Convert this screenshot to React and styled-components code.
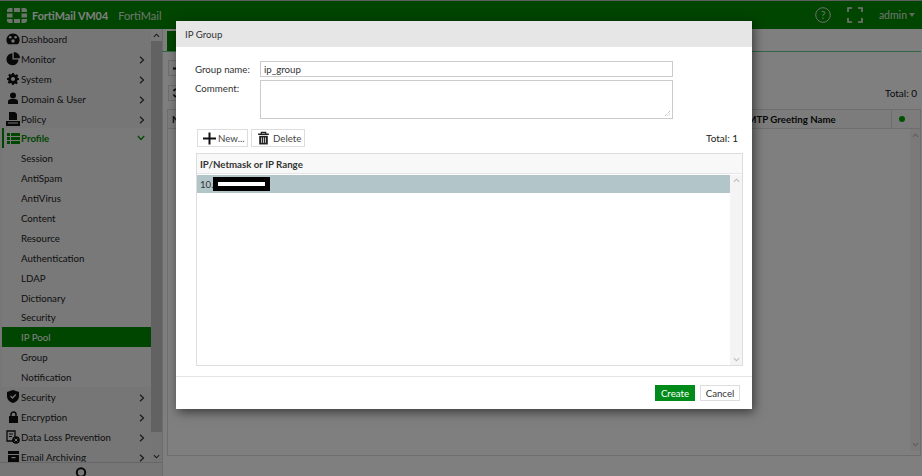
import React from 'react';
import styled, { createGlobalStyle } from 'styled-components';

const Global = createGlobalStyle`
  html, body { margin: 0; padding: 0; height: 100%; overflow: hidden; }
  body { font-family: Lato, "Open Sans", sans-serif; font-size: 9.7px; color: #222; background: #7f7f7f; }
  #root { height: 100%; }
`;

const Page = styled.div`
  position: relative;
  width: 922px;
  height: 476px;
  display: flex;
  flex-direction: column;
  overflow: hidden;
  background: #fff;
`;
const TopLine = styled.div`height: 1px; background: #bbb;`;
const TopBar = styled.header`
  height: 28px;
  flex: none;
  background: #008a00;
  color: #fff;
  display: flex;
  align-items: center;
  padding: 0 7px 0 7px;
`;
const Brand = styled.div`font-size: 10.8px; font-weight: 700; margin-left: 5px; white-space: nowrap;`;
const Product = styled.div`font-size: 11px; margin-left: 10px; opacity: .85;`;
const Spacer = styled.div`flex: 1;`;
const UserName = styled.div`font-size: 10.5px; margin-left: 16px; opacity: .85; display: flex; align-items: center; gap: 2px;`;
const Caret = styled.span`
  width: 0; height: 0;
  border-left: 3.5px solid transparent; border-right: 3.5px solid transparent;
  border-top: 4px solid #ddd;
`;
const TopIcon = styled.svg`margin-left: ${p => p.$ml || 0}px; display: block;`;

const Body = styled.div`flex: 1; display: flex; min-height: 0;`;
const Side = styled.aside`width: 163px; flex: none; display: flex; flex-direction: column; background: #ececec; border-right: 1px solid #d8d8d8; box-sizing: border-box;`;
const SideMain = styled.div`flex: 1; display: flex; min-height: 0;`;
const Menu = styled.nav`width: 151px; flex: none; overflow: hidden;`;
const Item = styled.div`
  height: 19.9px;
  display: flex;
  align-items: center;
  position: relative;
  box-sizing: border-box;
  padding-left: ${p => p.$sub ? 19 : p.$open ? 2 : 4}px;
  margin-left: 2px;
  font-size: 9.7px;
  white-space: nowrap;
  color: ${p => p.$active ? '#fff' : p.$open ? '#008a00' : '#222'};
  background: ${p => p.$active ? '#008a00' : p.$shade ? '#f2f2f2' : 'transparent'};
  font-weight: ${p => p.$open ? 700 : 400};
  border-left: ${p => p.$open ? '2px solid #008a00' : '0'};
`;
const ItemIcon = styled.span`width: 14px; height: 14px; margin-right: 1px; flex: none; display: flex; align-items: center; justify-content: center;`;
const Arrow = styled.svg`position: absolute; right: 6px; top: 7px;`;
const Track = styled.div`width: 11px; flex: none; background: #eaeaea; display: flex; flex-direction: column;`;
const TrackEnd = styled.div`height: 12px; display: flex; align-items: center; justify-content: center; background: ${p => p.$bg || 'transparent'};`;
const Thumb = styled.div`height: ${p => p.$h}px; background: #c4c4c4; flex: none;`;
const TrackRest = styled.div`flex: 1;`;
const SideFoot = styled.div`height: 13px; flex: none; border-top: 1px solid #ccc; display: flex; justify-content: center; overflow: hidden;`;

const Content = styled.main`flex: 1; min-width: 0; display: flex; flex-direction: column; padding: 0 1px 0 4px;`;
const Tabs = styled.div`height: 20px; border-bottom: 1px solid #66cc88; flex: none; display: flex; margin: 2px 0 0 -5px; padding-left: 5px;`;
const Tab = styled.div`width: 12px; background: #008a00;`;
const ToolArea = styled.div`height: 57px; flex: none; display: flex; flex-direction: column; padding: 8px 0 0 1px; box-sizing: border-box;`;
const ToolLine = styled.div`display: flex; align-items: center; justify-content: space-between; margin-top: ${p => p.$mt || 0}px; font-size: 10px; color: #111; padding-right: 4px;`;
const SmallBtn = styled.div`width: 30px; height: 16px; box-sizing: border-box; border: 1px solid #ddd; background: #fff; display: flex; align-items: center; padding-left: 2px;`;
const ListHead = styled.div`
  height: 20px; flex: none; display: flex; align-items: center; font-weight: 700; font-size: 9.7px; color: #111;
  border: 1px solid #ddd; box-sizing: border-box; background: #f8f8f8;
`;
const NameCell = styled.div`width: 574px; padding-left: 4px; box-sizing: border-box; flex: none; white-space: nowrap;`;
const HeadCell = styled.div`flex: 1; white-space: nowrap;`;
const DotCell = styled.div`width: 29px; height: 100%; border-left: 1px solid #ddd; display: flex; align-items: center; justify-content: center; padding-right: 8px; box-sizing: border-box;`;
const Dot = styled.span`width: 6px; height: 6px; border-radius: 50%; background: #00a000;`;
const ListBody = styled.div`flex: none; height: 327px; display: flex; justify-content: flex-end; border: 1px solid #ddd; border-top: 0; box-sizing: border-box;`;
const ListTrack = styled.div`width: 10px; height: 322px; background: #f4f4f4; display: flex; flex-direction: column; justify-content: space-between; padding: 3px 0; box-sizing: border-box;`;

const Overlay = styled.div`position: absolute; inset: 0; background: rgba(0,0,0,.5);`;
const Modal = styled.section`
  position: absolute;
  left: 176px; top: 21px;
  width: 576px; height: 388px;
  background: #fff;
  display: flex; flex-direction: column;
  box-shadow: 2px 3px 10px rgba(0,0,0,.55);
`;
const ModalHead = styled.div`height: 26px; flex: none; background: #e6e6e6; display: flex; align-items: center; padding-left: 9px; font-size: 9.7px; color: #333;`;
const Form = styled.div`padding: 14px 79px 0 19px; display: flex; flex-direction: column; gap: 3px;`;
const FormRow = styled.div`display: flex; align-items: flex-start;`;
const Label = styled.label`width: 65px; flex: none; font-size: 9.7px; color: #333; line-height: 16px;`;
const TextBox = styled.div`
  flex: 1; box-sizing: border-box; height: ${p => p.$h}px; border: 1px solid #ccc; font-size: 9.7px; color: #333;
  padding: 0 3px; line-height: 14px; position: relative;
`;
const Grip = styled.svg`position: absolute; right: 1px; bottom: 1px;`;
const ToolBar = styled.div`display: flex; align-items: center; gap: 3px; padding: 10px 10px 0 21px; height: 18px;`;
const Btn = styled.div`
  height: 18px; box-sizing: border-box; width: ${p => p.$w}px; border: 1px solid #ddd; background: #fff;
  display: flex; align-items: center; gap: 1px; padding-left: ${p => p.$pl}px; font-size: 9.7px; color: #444;
`;
const TotalText = styled.div`margin-left: auto; padding-right: 4px; font-size: 10px; color: #222;`;
const Table = styled.div`margin: 6px 9px 0 20px; height: 213px; flex: none; border: 1px solid #ddd; box-sizing: border-box; display: flex; flex-direction: column;`;
const TableHead = styled.div`height: 20px; flex: none; background: #f8f8f8; border-bottom: 1px solid #e6e6e6; font-weight: 700; font-size: 9.7px; color: #333; display: flex; align-items: center; padding-left: 3px; box-sizing: border-box;`;
const TableBody = styled.div`flex: 1; display: flex; padding-top: 1px; min-height: 0;`;
const Rows = styled.div`flex: 1;`;
const Row = styled.div`height: 18px; background: #b2c5c8; display: flex; align-items: center; padding-left: 3px; font-size: 9.7px; color: #333; position: relative;`;
const Redact = styled.div`position: absolute; left: 16px; top: 2px; width: 57px; height: 14px; background: #000; display: flex; align-items: center; justify-content: center;`;
const RedactInner = styled.div`width: 47px; height: 4px; background: #fff;`;
const TableTrack = styled.div`width: 12px; flex: none; background: #f4f4f4; display: flex; flex-direction: column; justify-content: space-between; padding: 2px 0;`;
const Foot = styled.footer`margin-top: 10px; flex: 1; border-top: 1px solid #e6e6e6; display: flex; align-items: flex-start; justify-content: flex-end; gap: 5px; padding: 8px 12px 0 0;`;
const FootBtn = styled.div`
  width: 40px; height: 16px; box-sizing: border-box; display: flex; align-items: center; justify-content: center; font-size: 9.7px;
  background: ${p => p.$primary ? '#008a1a' : '#fff'};
  color: ${p => p.$primary ? '#fff' : '#333'};
  border: 1px solid ${p => p.$primary ? '#008a1a' : '#ddd'};
`;

const Chev = ({ up, color = '#999', size = 7 }) => (
  <svg width={size} height={size} viewBox="0 0 8 8" style={{ display: 'block', margin: '0 auto' }}>
    <path d={up ? 'M1 5.5 4 2.5 7 5.5' : 'M1 2.5 4 5.5 7 2.5'} fill="none" stroke={color} strokeWidth="1.2" />
  </svg>
);
const Right = () => (
  <Arrow width="6" height="8" viewBox="0 0 6 8"><path d="M1 .8 4.5 4 1 7.2" fill="none" stroke="#333" strokeWidth="1.2" /></Arrow>
);
const Down = () => (
  <Arrow width="8" height="6" viewBox="0 0 8 6"><path d="M.8 1 4 4.5 7.2 1" fill="none" stroke="#008a00" strokeWidth="1.2" /></Arrow>
);

const s = { fill: '#111' };
const icons = {
  dashboard: <svg width="14" height="12" viewBox="0 0 14 12"><path {...s} d="M7 .5a6.500 6.500 0 0 0-5.500 10c.3.5.7.8 1.200.8h8.600c.5 0 .9-.3 1.200-.8A6.500 6.500 0 0 0 7 .5z" /><circle cx="4.200" cy="4.300" r="1.300" fill="#eee" /><circle cx="9.600" cy="4.300" r="1.300" fill="#eee" /><circle cx="7" cy="8" r="1.700" fill="#eee" /></svg>,
  monitor: <svg width="14" height="14" viewBox="0 0 13 13"><path {...s} d="M6 1.200A5.600 5.600 0 1 0 11.600 7H6z" /><path {...s} d="M7.200 0v5.800H13A5.800 5.800 0 0 0 7.200 0z" /></svg>,
  system: <svg width="12" height="12" viewBox="0 0 12 12"><path {...s} fillRule="evenodd" d="M5 0h2l.3 1.600 1.200.5L9.900 1.200l1.400 1.400-.9 1.400.5 1.200L12 5v2l-1.600.3-.5 1.200.9 1.400-1.400 1.400-1.400-.9-1.200.5L7 12H5l-.3-1.600-1.200-.5-1.400.9L.7 9.400l.9-1.400-.5-1.200L0 7V5l1.600-.3.500-1.200-.9-1.400L2.600.7l1.400.9 1.200-.5zM6 4a2 2 0 1 0 0 4 2 2 0 0 0 0-4z" /></svg>,
  user: <svg width="12" height="13" viewBox="0 0 12 13"><circle {...s} cx="6" cy="3.500" r="3" /><path {...s} d="M1 12V9.500C1 8 2.500 7 4 7h4c1.500 0 3 1 3 2.500V12z" /></svg>,
  policy: <svg width="14" height="14" viewBox="0 0 14 14"><path {...s} d="M3 0h6l2 2v6H3z" /><rect {...s} x="0" y="9" width="14" height="5" /><rect x="2" y="10.500" width="10" height="1" fill="#eee" /></svg>,
  profile: <svg width="13" height="11" viewBox="0 0 13 11"><g fill="#008a00"><rect width="3" height="3" /><rect x="4" width="9" height="3" /><rect y="4" width="3" height="3" /><rect x="4" y="4" width="9" height="3" /><rect y="8" width="3" height="3" /><rect x="4" y="8" width="9" height="3" /></g></svg>,
  security: <svg width="12" height="13" viewBox="0 0 12 13"><path {...s} d="M6 0 12 2v4c0 3.500-2.500 6-6 7-3.500-1-6-3.500-6-7V2z" /><path d="M3.500 6 5.500 8 8.800 4.500" fill="none" stroke="#eee" strokeWidth="1.300" /></svg>,
  lock: <svg width="11" height="12" viewBox="0 0 11 12"><rect {...s} x="1" y="5" width="9" height="7" /><path d="M3 5V3.500a2.500 2.500 0 0 1 5 0V5" fill="none" stroke="#111" strokeWidth="1.500" /></svg>,
  dlp: <svg width="14" height="14" viewBox="0 0 14 14"><path d="M1 1h8v10H1z" fill="none" stroke="#111" strokeWidth="1.300" /><path d="M3 4h4M3 6.500h3" stroke="#111" /><circle {...s} cx="10" cy="10" r="3.800" /><path d="M8.500 8.500l3 3m0-3l-3 3" stroke="#eee" /></svg>,
  archive: <svg width="13" height="12" viewBox="0 0 13 12"><rect {...s} x="1" y="0" width="11" height="3" /><path {...s} d="M1 4h11v8H1z" /><rect x="4.500" y="6" width="4" height="1.200" fill="#eee" /></svg>,
};

const menu = [
  { t: 'Dashboard', i: 'dashboard' },
  { t: 'Monitor', i: 'monitor', a: 1 },
  { t: 'System', i: 'system', a: 1 },
  { t: 'Domain & User', i: 'user', a: 1 },
  { t: 'Policy', i: 'policy', a: 1 },
  { t: 'Profile', i: 'profile', open: 1 },
  ...['Session', 'AntiSpam', 'AntiVirus', 'Content', 'Resource', 'Authentication', 'LDAP', 'Dictionary', 'Security'].map(t => ({ t, sub: 1 })),
  { t: 'IP Pool', sub: 1, active: 1 },
  { t: 'Group', sub: 1 },
  { t: 'Notification', sub: 1 },
  { t: 'Security', i: 'security', a: 1 },
  { t: 'Encryption', i: 'lock', a: 1 },
  { t: 'Data Loss Prevention', i: 'dlp', a: 1 },
  { t: 'Email Archiving', i: 'archive', a: 1 },
];

const Logo = () => (
  <svg width="20" height="15" viewBox="0 0 20 15" style={{ display: 'block' }}>
    <g fill="#d8e8d8">
      <path d="M0 4V2.500C0 1 1 0 2.500 0H5.500v4z" /><rect x="7" width="6" height="4" /><path d="M14.500 0h3C19 0 20 1 20 2.500V4h-5.500z" />
      <rect y="5.500" width="5.500" height="4" /><rect x="14.500" y="5.500" width="5.500" height="4" />
      <path d="M0 11h5.500v4h-3C1 15 0 14 0 12.500z" /><rect x="7" y="11" width="6" height="4" /><path d="M14.500 11H20v1.500c0 1.500-1 2.500-2.500 2.500h-3z" />
    </g>
  </svg>
);

export default function App() {
  return (
    <Page>
      <Global />
      <TopLine />
      <TopBar>
        <Logo />
        <Brand>FortiMail VM04</Brand>
        <Product>FortiMail</Product>
        <Spacer />
        <TopIcon width="16" height="16" viewBox="0 0 16 16">
          <circle cx="8" cy="8" r="7.300" fill="none" stroke="#ddd" />
          <text x="8" y="11.500" textAnchor="middle" fontSize="10.500" fill="#ddd" fontFamily="Lato, sans-serif">?</text>
        </TopIcon>
        <TopIcon $ml={16} width="16" height="16" viewBox="0 0 16 16">
          <path d="M1 5V1h4M11 1h4v4M15 11v4h-4M5 15H1v-4" fill="none" stroke="#eee" strokeWidth="1.600" />
        </TopIcon>
        <UserName>admin<Caret /></UserName>
      </TopBar>
      <Body>
        <Side>
          <SideMain>
            <Menu>
              {menu.map((m, k) => (
                <Item key={k} $sub={m.sub} $active={m.active} $open={m.open} $shade={m.sub || m.open}>
                  {m.i && <ItemIcon>{icons[m.i]}</ItemIcon>}
                  {m.t}
                  {m.a && <Right />}
                  {m.open && <Down />}
                </Item>
              ))}
            </Menu>
            <Track>
              <TrackEnd $bg="#f2f2f2"><Chev up color="#333" /></TrackEnd>
              <Thumb $h={391} />
              <TrackRest />
              <TrackEnd><Chev color="#333" /></TrackEnd>
            </Track>
          </SideMain>
          <SideFoot>
            <svg width="14" height="14" viewBox="0 0 14 14" style={{ marginTop: 4 }}><circle cx="7" cy="5.500" r="4.200" fill="none" stroke="#111" strokeWidth="2" /></svg>
          </SideFoot>
        </Side>
        <Content>
          <Tabs><Tab /></Tabs>
          <ToolArea>
            <ToolLine>
              <SmallBtn>
                <svg width="9" height="9" viewBox="0 0 9 9" style={{ marginLeft: 2 }}><path d="M4.500 0v9M0 4.500h9" stroke="#111" strokeWidth="2" /></svg>
              </SmallBtn>
            </ToolLine>
            <ToolLine $mt={9}>
              <SmallBtn>
                <svg width="10" height="10" viewBox="0 0 10 10" style={{ marginLeft: 1 }}><path d="M8.500 3.500A4 4 0 0 0 1.500 3M1.500 6.500A4 4 0 0 0 8.500 7" fill="none" stroke="#111" strokeWidth="1.800" /></svg>
              </SmallBtn>
              Total: 0
            </ToolLine>
          </ToolArea>
          <ListHead>
            <NameCell>Name</NameCell>
            <HeadCell>SMTP Greeting Name</HeadCell>
            <DotCell><Dot /></DotCell>
          </ListHead>
          <ListBody>
            <ListTrack><Chev up color="#bbb" /><Chev color="#bbb" /></ListTrack>
          </ListBody>
        </Content>
      </Body>
      <Overlay />
      <Modal>
        <ModalHead>IP Group</ModalHead>
        <Form>
          <FormRow><Label>Group name:</Label><TextBox $h={16}>ip_group</TextBox></FormRow>
          <FormRow>
            <Label>Comment:</Label>
            <TextBox $h={39}>
              <Grip width="7" height="7" viewBox="0 0 7 7"><path d="M6 1 1 6M6 3.500 3.500 6" stroke="#aaa" strokeDasharray="1 1" /></Grip>
            </TextBox>
          </FormRow>
        </Form>
        <ToolBar>
          <Btn $w={51} $pl={4}>
            <svg width="15" height="15" viewBox="0 0 15 15"><path d="M7.500 1.500v12M1 7.500h13" stroke="#111" strokeWidth="2" /></svg>
            New...
          </Btn>
          <Btn $w={54} $pl={5}>
            <svg width="13" height="14" viewBox="0 0 12 13" style={{ marginRight: 2 }}><path d="M1 3h10M4 3V1.200h4V3" fill="none" stroke="#222" strokeWidth="1.200" /><path d="M2 4.500h8V12.500H2z" fill="#222" /><path d="M4.200 6v5M6 6v5M7.800 6v5" stroke="#fff" strokeWidth=".7" /></svg>
            Delete
          </Btn>
          <TotalText>Total: 1</TotalText>
        </ToolBar>
        <Table>
          <TableHead>IP/Netmask or IP Range</TableHead>
          <TableBody>
            <Rows>
              <Row>10.<Redact><RedactInner /></Redact></Row>
            </Rows>
            <TableTrack><Chev up color="#bbb" /><Chev color="#bbb" /></TableTrack>
          </TableBody>
        </Table>
        <Foot>
          <FootBtn $primary>Create</FootBtn>
          <FootBtn>Cancel</FootBtn>
        </Foot>
      </Modal>
    </Page>
  );
}
